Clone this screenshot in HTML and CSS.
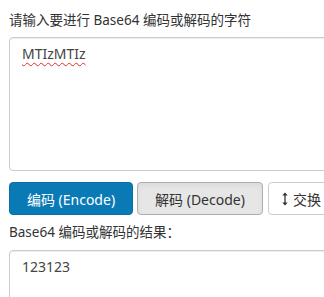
FILE: index.html
```html
<!DOCTYPE html>
<html lang="zh-CN">
<head>
<meta charset="utf-8">
<link rel="stylesheet" href="styles.css">
</head>
<body>
<div class="page">
  <div class="label">请输入要进行 Base64 编码或解码的字符</div>
  <div class="area area-input"><span class="typo">MTIzMTIz</span></div>
  <div class="actions">
    <button class="btn btn-primary">编码 (Encode)</button>
    <button class="btn btn-active">解码 (Decode)</button>
    <button class="btn btn-default"><svg class="swap" viewBox="0 0 8 14" width="8" height="14"><path d="M4 1.5 V12.5" stroke="#333" stroke-width="1.3" fill="none"/><path d="M4 0.5 L1.3 3.6 H6.7 Z M4 13.5 L1.3 10.4 H6.7 Z" fill="#333"/></svg>交换</button>
  </div>
  <div class="label label2">Base64 编码或解码的结果：</div>
  <div class="area area-output">123123</div>
</div>
</body>
</html>
```
FILE: styles.css
```css
html, body {
  margin: 0;
  padding: 0;
  background: #fff;
  overflow: hidden;
}
.page {
  width: 400px;
  padding: 10px 0 0 9px;
  font-family: "Noto Sans", "Noto Sans CJK SC", sans-serif;
  color: #333;
  font-size: 13.5px;
}
.label {
  height: 20px;
  line-height: 20px;
  white-space: nowrap;
}
.area {
  margin-top: 7px;
  box-sizing: border-box;
  height: 134px;
  border: 1px solid #ccc;
  border-radius: 4px;
  box-shadow: inset 0 1px 1px rgba(0,0,0,.075);
  padding: 6px 12px;
  font-size: 14px;
  line-height: 20px;
  color: #444;
}
.typo {
  text-decoration: underline wavy #e0302a;
  text-decoration-thickness: 1px;
  text-underline-offset: 3px;
}
.actions {
  display: flex;
  gap: 4px;
  margin-top: 11px;
}
.btn {
  box-sizing: border-box;
  height: 33px;
  border-radius: 4px;
  font-family: inherit;
  font-size: 14px;
  padding: 0 12px;
  display: flex;
  align-items: center;
  justify-content: center;
  white-space: nowrap;
  color: #333;
}
.btn-primary {
  width: 124px;
  background: #0a7ab6;
  border: 1px solid #0a6fa6;
  color: #fff;
}
.btn-active {
  width: 126px;
  background: #e6e6e6;
  border: 1px solid #adadad;
  box-shadow: inset 0 3px 5px rgba(0,0,0,.05);
}
.btn-default {
  margin-left: 1px;
  width: 80px;
  background: #fff;
  border: 1px solid #ccc;
  justify-content: flex-start;
  padding-left: 12px;
}
.swap {
  margin-right: 4px;
}
.label2 {
  margin-top: 7px;
}
.area-output {
  margin-top: 8px;
  height: 80px;
}
```
